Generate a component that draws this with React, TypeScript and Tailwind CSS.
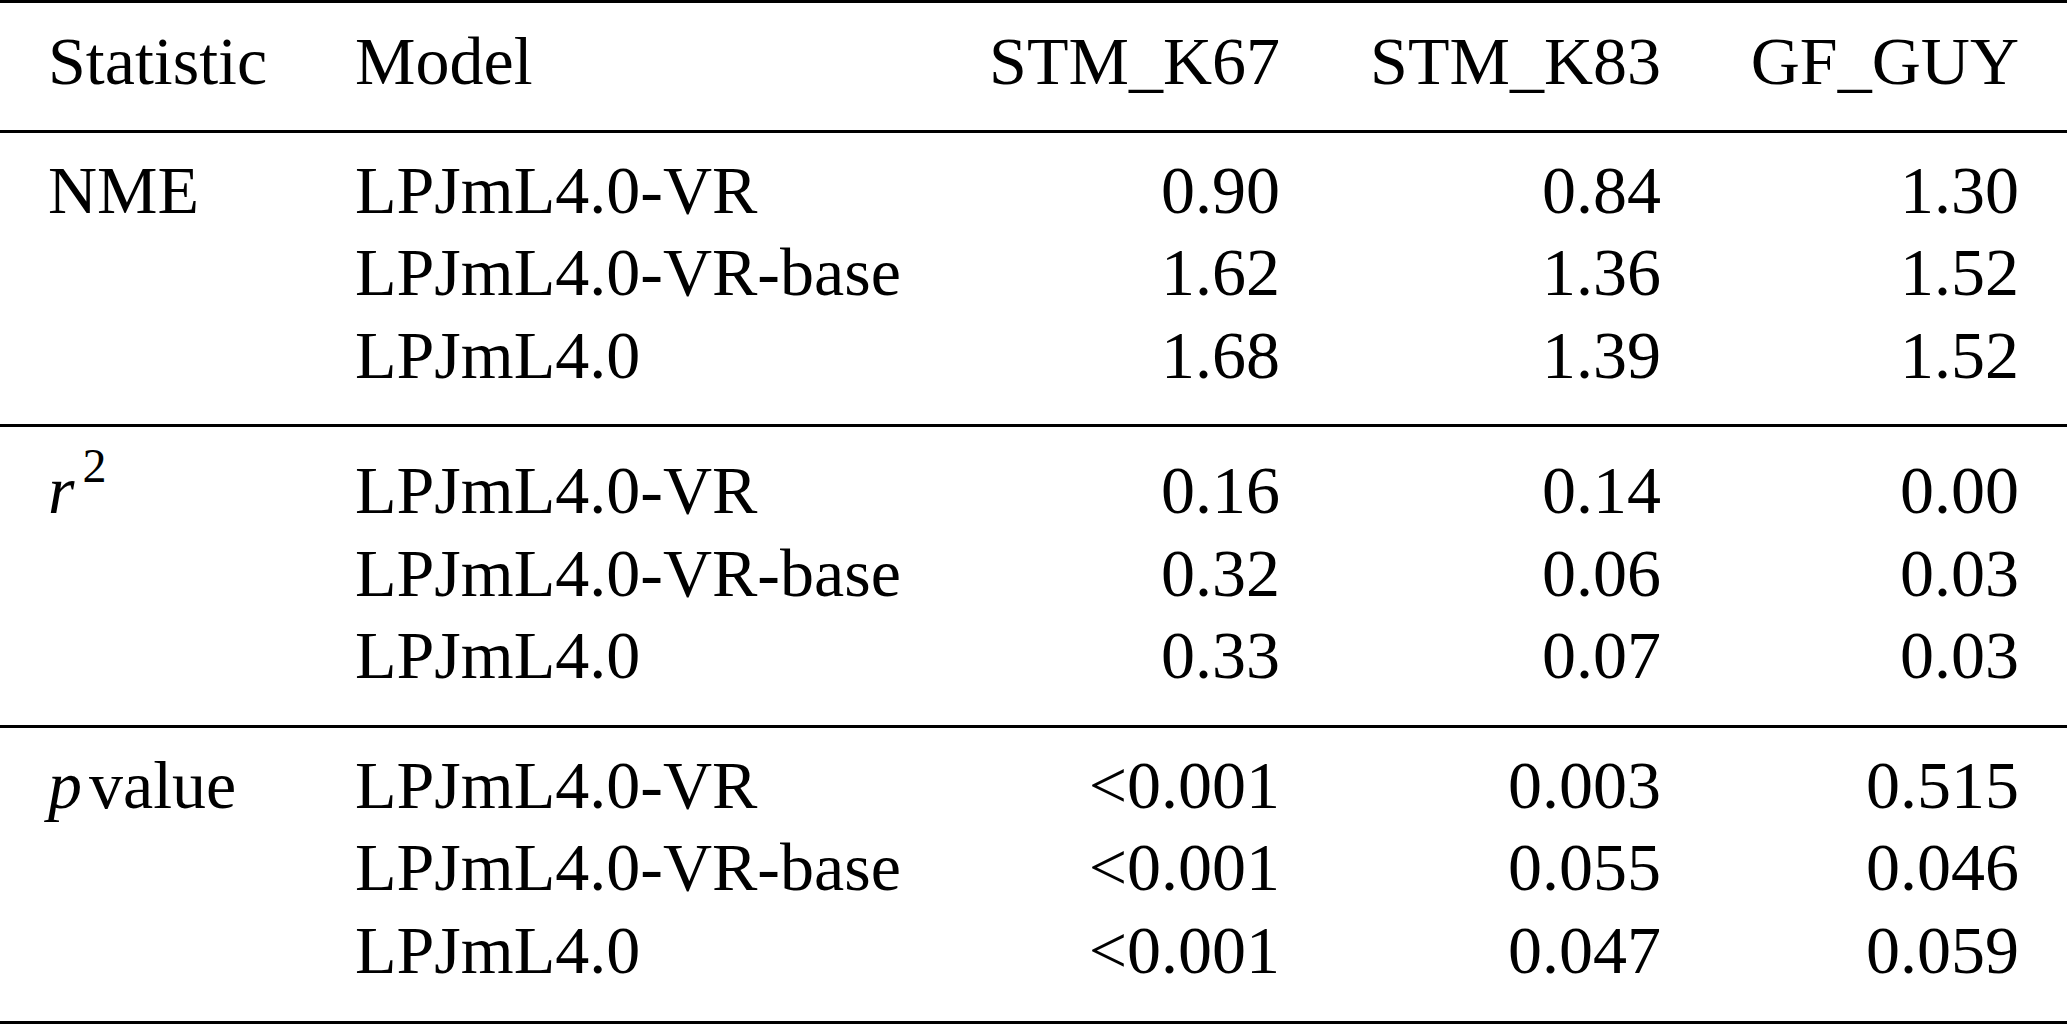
const cols = 'grid grid-cols-[307px_545px_380px_381px_358px] px-[48px]';

type Row = { model: string; values: string[] };

const nme: Row[] = [
  { model: 'LPJmL4.0-VR', values: ['0.90', '0.84', '1.30'] },
  { model: 'LPJmL4.0-VR-base', values: ['1.62', '1.36', '1.52'] },
  { model: 'LPJmL4.0', values: ['1.68', '1.39', '1.52'] },
];

const r2: Row[] = [
  { model: 'LPJmL4.0-VR', values: ['0.16', '0.14', '0.00'] },
  { model: 'LPJmL4.0-VR-base', values: ['0.32', '0.06', '0.03'] },
  { model: 'LPJmL4.0', values: ['0.33', '0.07', '0.03'] },
];

const pval: Row[] = [
  { model: 'LPJmL4.0-VR', values: ['<0.001', '0.003', '0.515'] },
  { model: 'LPJmL4.0-VR-base', values: ['<0.001', '0.055', '0.046'] },
  { model: 'LPJmL4.0', values: ['<0.001', '0.047', '0.059'] },
];

function Section({ label, rows, pad }: { label: React.ReactNode; rows: Row[]; pad: string }) {
  return (
    <div className={`${cols} ${pad} border-b-[3px] border-black`}>
      {rows.map((row, i) => (
        <div key={row.model} className="contents">
          <div className="whitespace-nowrap">{i === 0 ? label : null}</div>
          <div className="whitespace-nowrap">{row.model}</div>
          {row.values.map((v, j) => (
            <div key={j} className="text-right whitespace-nowrap">
              {v}
            </div>
          ))}
        </div>
      ))}
    </div>
  );
}

export default function App() {
  return (
    <div className="w-[2067px] bg-white text-black font-[family-name:'Liberation_Serif','Times_New_Roman',serif] text-[68px] leading-[82.5px]">
      <div className={`${cols} border-t-[3px] border-b-[3px] border-black pt-[17px] pb-[27px]`}>
        <div>Statistic</div>
        <div>Model</div>
        <div className="text-right">STM_K67</div>
        <div className="text-right">STM_K83</div>
        <div className="text-right">GF_GUY</div>
      </div>

      <Section label="NME" rows={nme} pad="pt-[16px] pb-[28px]" />

      <Section
        label={
          <span>
            <span className="italic">r</span>
            <span className="relative -top-[31px] ml-[8px] text-[48px] leading-none">2</span>
          </span>
        }
        rows={r2}
        pad="pt-[22px] pb-[28px]"
      />

      <Section
        label={
          <span>
            <span className="italic">p</span>
            <span className="ml-[7px]">value</span>
          </span>
        }
        rows={pval}
        pad="pt-[16px] pb-[30px]"
      />
    </div>
  );
}
